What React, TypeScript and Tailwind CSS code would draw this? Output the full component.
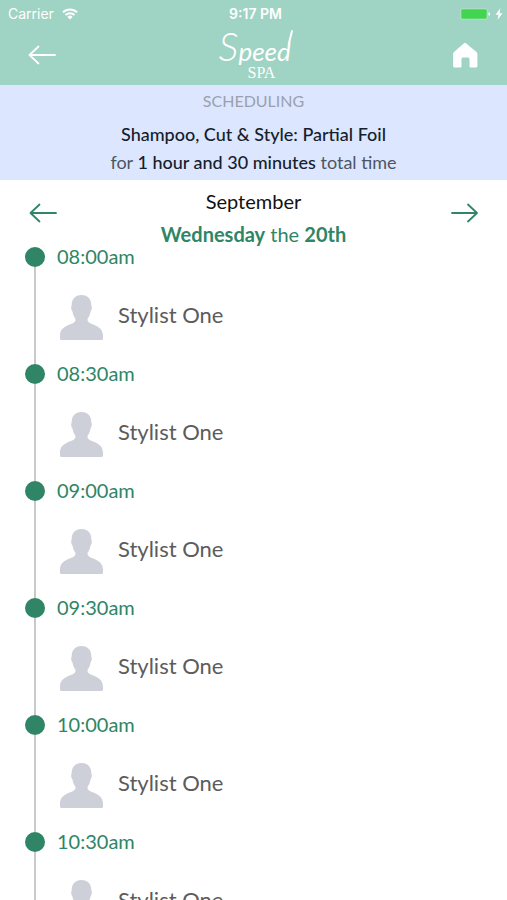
const times = ['08:00am', '08:30am', '09:00am', '09:30am', '10:00am', '10:30am'];

function Arrow({ flip = false }: { flip?: boolean }) {
  return (
    <svg viewBox="0 0 28 20" className="h-5 w-7" fill="none" stroke="currentColor" strokeWidth="1.8" strokeLinecap="round" strokeLinejoin="round" aria-hidden="true">
      {flip ? <path d="M2 10h25M18 1.500 27 10l-9 8.500" /> : <path d="M27 10H2M10.500 1.500 1.500 10l9 8.500" />}
    </svg>
  );
}

function StatusBar() {
  return (
    <div className="grid h-7 grid-cols-3 items-center pr-1 pl-2 text-sm">
      <div className="flex items-center gap-2 font-['Inter','Roboto',sans-serif]">
        <span>Carrier</span>
        <svg viewBox="0 0 16 12" className="h-3 w-4" fill="none" stroke="currentColor" strokeWidth="2" aria-hidden="true">
          <path d="M1 4.300a10 10 0 0 1 14 0M3.500 7a6.400 6.400 0 0 1 9 0" />
          <path d="M8 11.500 5.400 8.900a3.700 3.700 0 0 1 5.200 0z" fill="currentColor" stroke="none" />
        </svg>
      </div>
      <div className="text-center font-['Inter','Roboto',sans-serif] text-sm font-semibold">9:17 PM</div>
      <div className="flex items-center justify-end gap-1">
        <svg viewBox="0 0 31 12" className="h-3 w-[31px]" aria-hidden="true">
          <rect x="0.500" y="0.500" width="27" height="11" rx="1.500" fill="#b9e8c4" />
          <rect x="1.300" y="1.200" width="25.400" height="9.600" rx="1" fill="#43d551" />
          <path d="M28.500 4.200c2 .4 2 3.200 0 3.600z" fill="#fff" />
        </svg>
        <svg viewBox="0 0 8 12" className="h-3 w-2" fill="currentColor" aria-hidden="true">
          <path d="M5.500 0 .5 6.800h3L2.500 12l5-6.800h-3z" />
        </svg>
      </div>
    </div>
  );
}

function Logo() {
  return (
    <div className="relative h-[53px] w-20 text-white">
      <div className="absolute top-0 left-[5px] flex items-baseline font-['Lato',sans-serif] leading-9 italic">
        <span className="text-[40px] font-light">S</span>
        <span className="text-[26px]">peed</span>
      </div>
      <svg viewBox="0 0 80 53" className="absolute inset-0 h-[53px] w-20" fill="none" stroke="currentColor" strokeLinecap="round" aria-hidden="true">
        <path d="M75 15 78 3" strokeWidth="2" />
      </svg>
      <div className="absolute top-[37px] left-[34px] font-['Liberation_Serif',serif] text-[16px] leading-4">SPA</div>
    </div>
  );
}

function Avatar() {
  return (
    <svg viewBox="0 0 43 45" className="h-[45px] w-[43px]" fill="#cdd0d9" aria-hidden="true">
      <path d="M21.500 0C15 0 11.500 4.400 11.700 10.500c-1 1-.4 5 .8 5.900.5 3.300 1.500 5.400 2.900 7.100v2.200C13.500 30.500 0 29 0 41v2.500Q0 45 1.500 45h40q1.500 0 1.500-1.500V41c0-12-13.500-10.500-15.400-15.300v-2.200c1.400-1.700 2.400-3.800 2.900-7.100 1.200-.9 1.800-4.900.8-5.900C31.500 4.400 28 0 21.500 0z" />
    </svg>
  );
}

export default function App() {
  return (
    <div className="flex h-screen flex-col overflow-hidden bg-white font-['Lato',sans-serif]">
      <header className="bg-[#9fd3c3] text-white">
        <StatusBar />
        <nav className="flex h-[57px] items-center justify-between px-7 pb-1">
          <button type="button" aria-label="Back" className="flex">
            <Arrow />
          </button>
          <Logo />
          <button type="button" aria-label="Home" className="flex">
            <svg viewBox="0 0 28 28" className="size-7" fill="currentColor" aria-hidden="true">
              <path d="M13 2.300q1-.9 2 0l10.500 8.600q.9.800.9 2V25q0 1.500-1.500 1.500h-5.400q-1 0-1-1V18q0-1.500-1.500-1.500h-5q-1.500 0-1.500 1.500v7.500q0 1-1 1H3.600q-1.500 0-1.500-1.500V12.900q0-1.200.9-2z" />
            </svg>
          </button>
        </nav>
      </header>

      <section className="bg-[#dce6fe] pt-1 pb-1 text-center text-[#14202b]">
        <h1 className="mb-[7px] text-[16px] leading-6 text-[#9aa0ae]">SCHEDULING</h1>
        <p className="text-[18px] leading-7 font-medium">Shampoo, Cut &amp; Style: Partial Foil</p>
        <p className="text-[18px] leading-7 text-[#4c5562]">
          for <span className="font-medium text-[#14202b]">1 hour and 30 minutes</span> total time
        </p>
      </section>

      <section className="flex items-start justify-between px-[29px] pt-[11px] text-[#2f8565]">
        <button type="button" aria-label="Previous day" className="mt-3 flex">
          <Arrow />
        </button>
        <div className="text-center text-[20px] leading-5">
          <h2 className="mb-[13px] text-[#111]">September</h2>
          <p>
            <b>Wednesday</b> the <b>20th</b>
          </p>
        </div>
        <button type="button" aria-label="Next day" className="mt-3 flex">
          <Arrow flip />
        </button>
      </section>

      <main className="min-h-0 flex-1 overflow-y-auto pt-[3px] [scrollbar-width:none]">
        <ol>
          {times.map((time) => (
            <li key={time} className="flex min-h-[117px] gap-3 pl-[25px]">
              <div className="flex w-5 flex-col items-center">
                <span className="size-5 rounded-full bg-[#2f8565]" />
                <span className="w-[2px] flex-1 bg-[#c9c9c9]" />
              </div>
              <div>
                <time className="-mt-[3px] block text-[20px] leading-6 text-[#2f8565]">{time}</time>
                <button type="button" className="mt-[27px] ml-[3px] flex items-center gap-[15px] text-[22px] text-[#5c5c5c]">
                  <Avatar />
                  <span className="pb-1.5 leading-6">Stylist One</span>
                </button>
              </div>
            </li>
          ))}
        </ol>
      </main>
    </div>
  );
}
